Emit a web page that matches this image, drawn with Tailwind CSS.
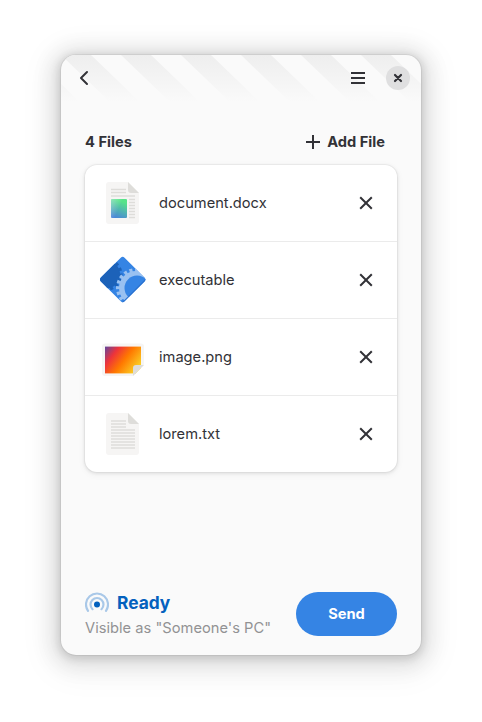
<!DOCTYPE html>
<html lang="en">
<head>
<meta charset="utf-8">
<title>Files</title>
<script src="https://cdn.jsdelivr.net/npm/@tailwindcss/browser@4"></script>
</head>
<body class="bg-white w-[482px] h-[722px] overflow-hidden px-[61px] pt-[55px] font-[Inter,sans-serif] text-[14.67px] text-[#323237]">
<main class="relative w-[360px] h-[600px] rounded-[15px] bg-[#fafafa] flex flex-col shadow-[0_2px_8px_2px_rgb(0_0_0/0.13),0_3px_20px_10px_rgb(0_0_0/0.09),0_6px_32px_16px_rgb(0_0_0/0.04),0_0_0_1px_rgb(0_0_0/0.05)]">
  <svg class="absolute inset-x-0 top-0 rounded-t-[15px]" width="360" height="47" viewBox="0 0 360 47">
    <defs><linearGradient id="fade" x1="0" y1="0" x2="0" y2="47" gradientUnits="userSpaceOnUse"><stop stop-color="#eeeeee"/><stop offset="1" stop-color="#fafafa"/></linearGradient></defs>
    <path fill="url(#fade)" d="M-60 0h30l49 47h-30zM0 0h30l49 47h-30zM60 0h30l49 47h-30zM120 0h30l49 47h-30zM180 0h30l49 47h-30zM240 0h30l49 47h-30zM300 0h30l49 47h-30z"/>
  </svg>
  <header class="relative h-[46px] flex items-center pl-[15px] pr-[11px]">
    <button class="size-4 flex"><svg width="16" height="16" fill="none" stroke="#323237" stroke-width="2" stroke-linecap="round" stroke-linejoin="round"><path d="M11 2 5 8l6 6"/></svg></button>
    <button class="ml-auto"><svg width="16" height="16" fill="#323237"><path d="M1 2h14v2H1zM1 7h14v2H1zM1 12h14v2H1z"/></svg></button>
    <button class="ml-5 size-6 rounded-full bg-[#dfdfe0] flex items-center justify-center"><svg width="16" height="16" stroke="#323237" stroke-width="2.200" stroke-linecap="round"><path d="m5 5 6 6m0-6-6 6"/></svg></button>
  </header>
  <section class="px-6 pt-[24px]">
    <div class="h-[34px] flex items-center justify-between font-bold">
      <h1>4 Files</h1>
      <button class="flex items-center gap-1.5 pr-3"><svg width="16" height="16" fill="#323237"><path d="M7 1h2v6h6v2H9v6H7V9H1V7h6z"/></svg><span>Add File</span></button>
    </div>
    <ul class="mt-1.5 rounded-xl bg-white divide-y divide-[#ebebeb] shadow-[0_0_0_1px_rgb(0_0_0/0.03),0_1px_3px_1px_rgb(0_0_0/0.07),0_2px_6px_2px_rgb(0_0_0/0.03)]">
      <li class="h-[77px] flex items-center pl-3.5 pr-[23px]">
        <svg width="48" height="48" viewBox="0 0 48 48">
          <defs>
            <linearGradient id="pic" x1=".65" y1="0" x2=".3" y2="1"><stop offset=".1" stop-color="#57e389"/><stop offset="1" stop-color="#4a86d8"/></linearGradient>
            <linearGradient id="haze" x1="0" y1="0" x2=".6" y2=".3"><stop stop-color="#fff" stop-opacity=".35"/><stop offset="1" stop-color="#fff" stop-opacity="0"/></linearGradient>
          </defs>
          <path fill="#f6f5f4" d="M10 3H29l11 11v28a3 3 0 0 1-3 3H10a3 3 0 0 1-3-3V6a3 3 0 0 1 3-3z"/><path fill="#deddda" d="M29 3v8a3 3 0 0 0 3 3h8z"/>
          <path stroke="#deddda" stroke-width="1.300" d="M12 10.500h15M12 13.500h15M12 17h24M30 20.500h6M30 23.500h6M30 26.500h6M30 29.500h6M30 32.500h6M30 35.500h6M30 38.500h6"/>
          <rect x="12" y="20" width="16" height="19" rx="1" fill="url(#pic)"/><rect x="12" y="20" width="16" height="19" rx="1" fill="url(#haze)"/>
        </svg>
        <span class="ml-3">document.docx</span>
        <button class="ml-auto"><svg width="16" height="16" stroke="#323237" stroke-width="2"><path d="m2.200 2.200 11.600 11.600m0-11.600L2.200 13.800"/></svg></button>
      </li>
      <li class="h-[77px] flex items-center pl-3.5 pr-[23px]">
        <svg width="48" height="48" viewBox="0 0 48 48">
          <defs><clipPath id="diamond"><rect x="6.900" y="6.750" width="33.500" height="33.500" rx="2.700" transform="rotate(45 23.650 23.500)"/></clipPath></defs>
          <g clip-path="url(#diamond)">
            <path fill="#3584e4" d="M0 0h48v48H0z"/>
            <circle cx="7" cy="18.500" r="14" fill="#1c62b9"/><circle cx="7" cy="18.500" r="14.750" fill="none" stroke="#1c62b9" stroke-width="3.500" stroke-dasharray="3 2.793" stroke-dashoffset="1.500"/>
            <circle cx="37" cy="32" r="17" fill="#99c1f1"/><circle cx="37" cy="32" r="18" fill="none" stroke="#99c1f1" stroke-width="4" stroke-dasharray="3 2.655" stroke-dashoffset="1.500"/>
            <circle cx="38" cy="32" r="12.500" fill="#3584e4"/>
            <path d="M24 47.500 47.500 24" stroke="#2a70cc" stroke-width="3"/>
          </g>
        </svg>
        <span class="ml-3">executable</span>
        <button class="ml-auto"><svg width="16" height="16" stroke="#323237" stroke-width="2"><path d="m2.200 2.200 11.600 11.600m0-11.600L2.200 13.800"/></svg></button>
      </li>
      <li class="h-[77px] flex items-center pl-3.5 pr-[23px]">
        <svg width="48" height="48" viewBox="0 0 48 48">
          <defs><linearGradient id="sunset" gradientUnits="userSpaceOnUse" x1="5" y1="14" x2="39" y2="40"><stop stop-color="#5746a4"/><stop offset=".28" stop-color="#ed333b"/><stop offset=".56" stop-color="#ff7800"/><stop offset="1" stop-color="#fae02b"/></linearGradient></defs>
          <path fill="#f6f5f4" d="M6 10.500h36a3 3 0 0 1 3 3V32L34 43H6a3 3 0 0 1-3-3V13.500a3 3 0 0 1 3-3z"/>
          <path fill="url(#sunset)" d="M6 13h36v28H6z"/><path fill="#f6f5f4" fill-opacity=".6" d="M6 13h36v1H6zM6 40h28v1H6z"/>
          <path fill="#fff" d="M45.500 31.500v12H33.500z"/><path fill="#deddda" d="M45 32 34 43v-8a3 3 0 0 1 3-3z"/>
        </svg>
        <span class="ml-3">image.png</span>
        <button class="ml-auto"><svg width="16" height="16" stroke="#323237" stroke-width="2"><path d="m2.200 2.200 11.600 11.600m0-11.600L2.200 13.800"/></svg></button>
      </li>
      <li class="h-[76px] flex items-center pl-3.5 pr-[23px]">
        <svg width="48" height="48" viewBox="0 0 48 48">
          <path fill="#f6f5f4" d="M10 3H29l11 11v28a3 3 0 0 1-3 3H10a3 3 0 0 1-3-3V6a3 3 0 0 1 3-3z"/><path fill="#deddda" d="M29 3v8a3 3 0 0 0 3 3h8z"/>
          <path stroke="#deddda" stroke-width="1.500" d="M12 11h15M12 14h15M12 17h15M12 20h24M12 23h24M12 26h24M12 29h24M12 32h24M12 35h24M12 38h24"/>
        </svg>
        <span class="ml-3">lorem.txt</span>
        <button class="ml-auto"><svg width="16" height="16" stroke="#323237" stroke-width="2"><path d="m2.200 2.200 11.600 11.600m0-11.600L2.200 13.800"/></svg></button>
      </li>
    </ul>
  </section>
  <footer class="mt-auto px-6 pb-4 flex items-start justify-between">
    <div>
      <div class="flex items-center gap-2 h-6 text-[17.33px] font-bold text-[#0461be]">
        <svg width="24" height="24" viewBox="0 0 24 24" fill="none" stroke-width="2.200" stroke-linecap="round"><circle cx="12" cy="13.500" r="3" fill="#0461be"/><path stroke="#a9c8e8" d="M7.500 18.200a6.500 6.500 0 1 1 9 0M3 19.800a11 11 0 1 1 18 0"/></svg>
        <span>Ready</span>
      </div>
      <p class="mt-0.5 tracking-[0.02px] text-[#929294]">Visible as "Someone's PC"</p>
    </div>
    <button class="w-[101px] h-11 mt-[1px] rounded-full bg-[#3584e4] text-white font-bold">Send</button>
  </footer>
</main>
</body>
</html>
